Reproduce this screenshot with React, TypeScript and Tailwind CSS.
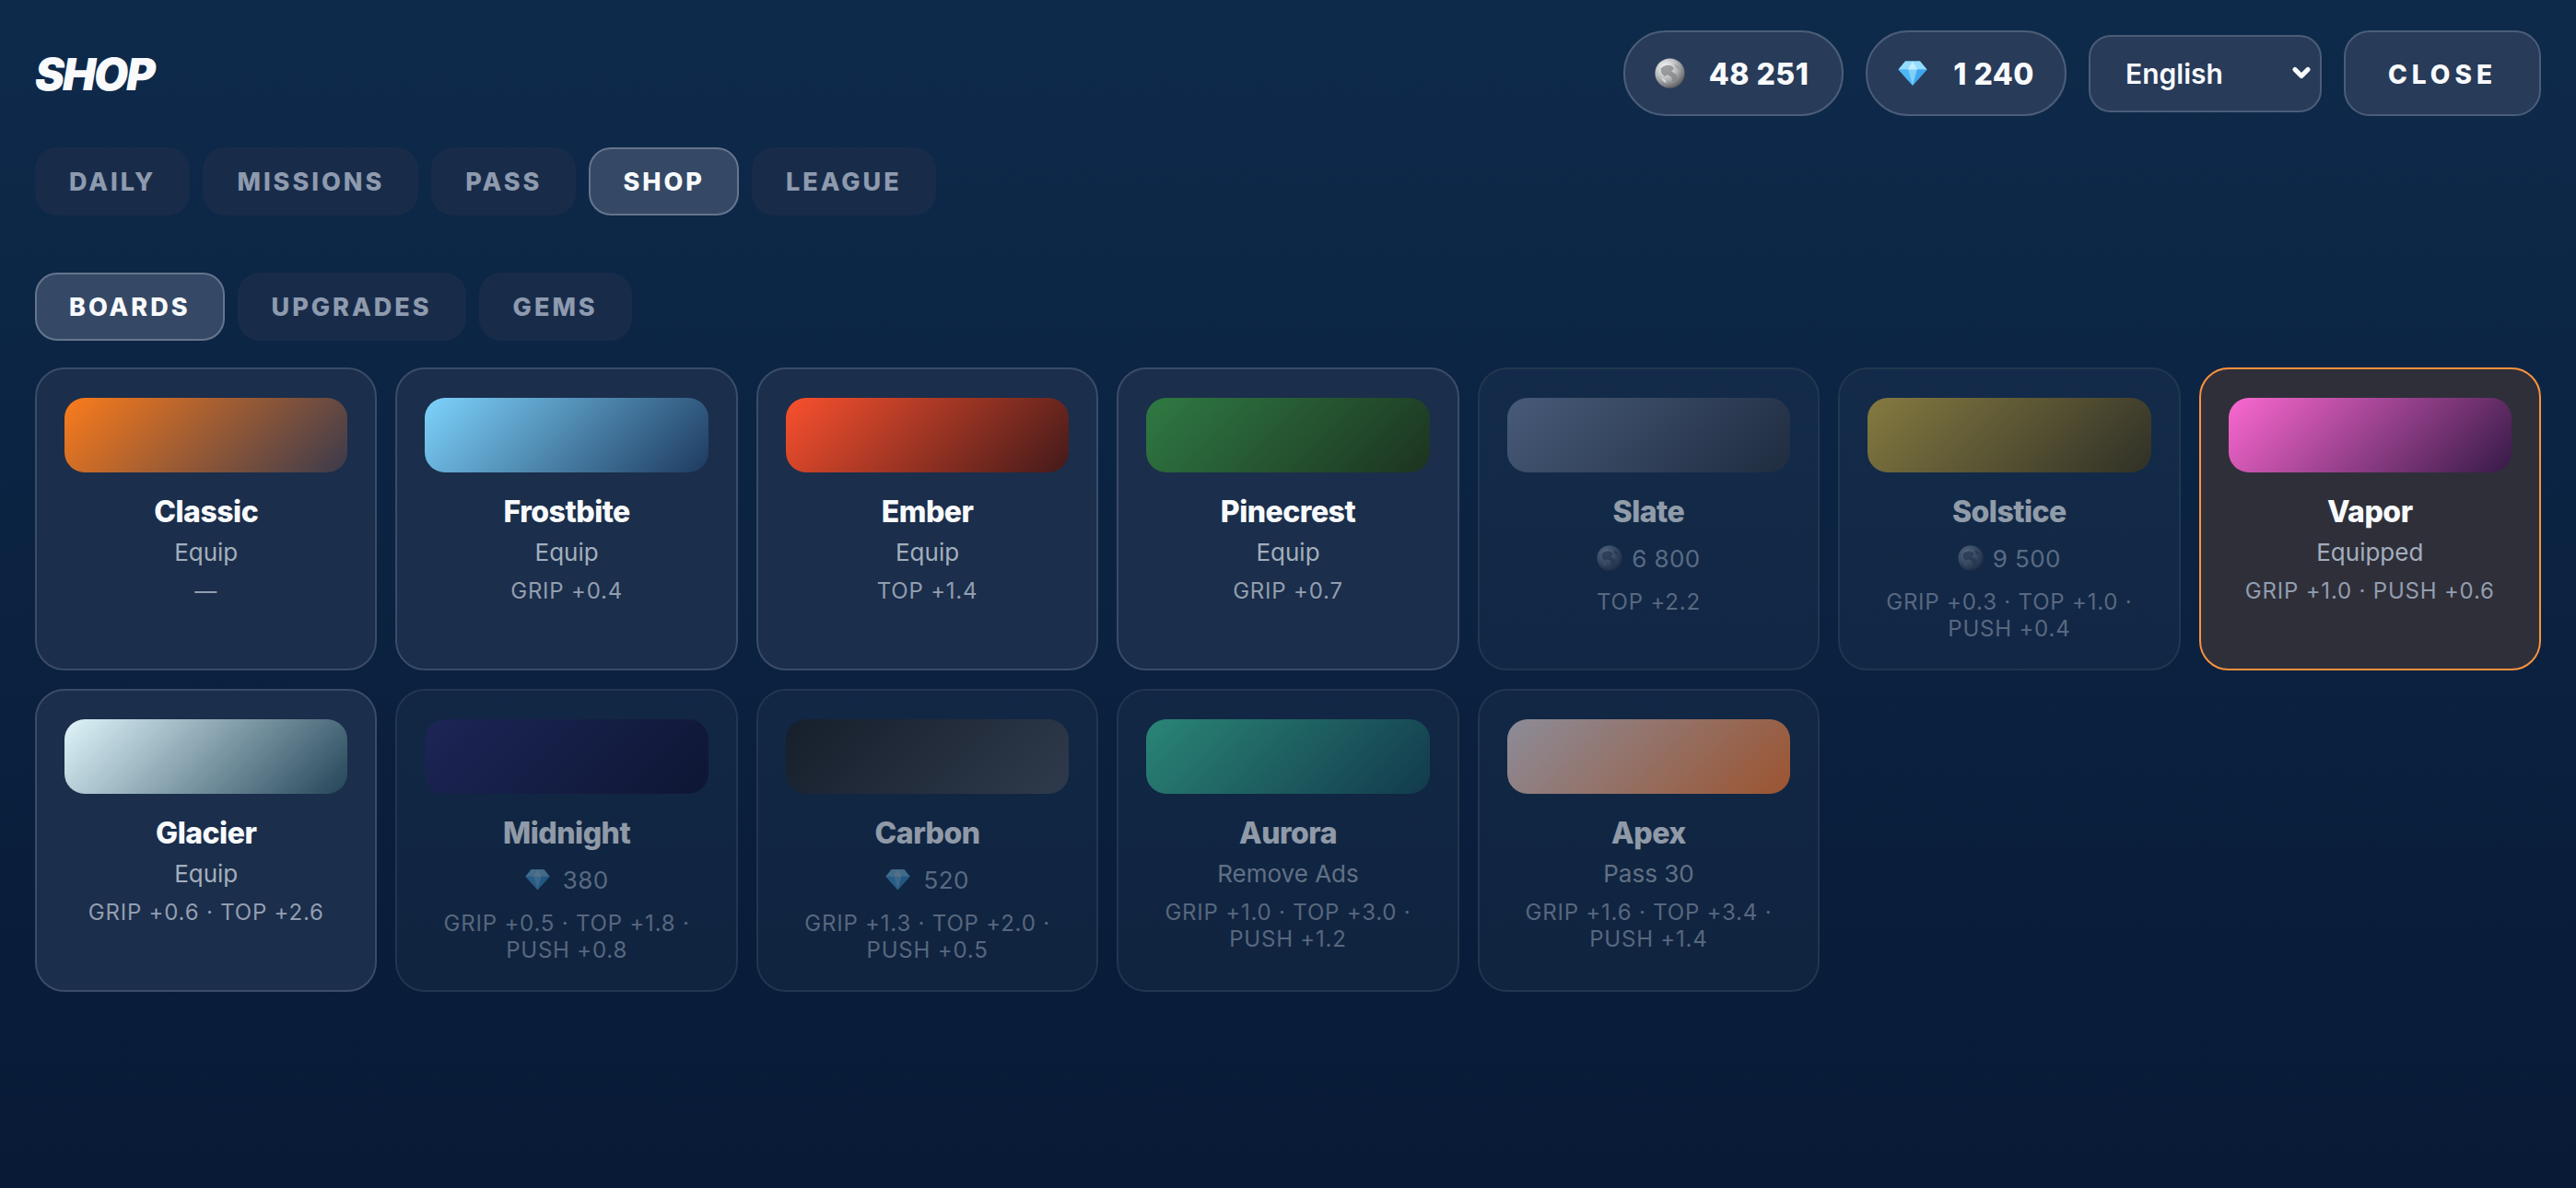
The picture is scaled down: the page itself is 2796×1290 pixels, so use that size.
import { ChevronDown } from 'lucide-react';

const FONT = "font-['Inter','Noto_Sans',sans-serif]";

function Coin({ dim = false, className = '' }: { dim?: boolean; className?: string }) {
  const gradId = dim ? 'coinDim' : 'coinLit';
  return (
    <svg viewBox="0 0 40 40" className={className}>
      <defs>
        <radialGradient id={gradId} cx="35%" cy="30%" r="80%">
          <stop offset="0%" stopColor={dim ? '#8c9bb0' : '#f8fafc'} />
          <stop offset="50%" stopColor={dim ? '#55647a' : '#b6b8ba'} />
          <stop offset="100%" stopColor={dim ? '#1e293b' : '#4b4d50'} />
        </radialGradient>
      </defs>
      <circle cx="20" cy="20" r="19.5" fill={`url(#${gradId})`} />
      <path
        d="M8 14c4-5 10-6 15-3 3 2 2 5-1 6 2 3 6 3 7 7 1 3-2 6-5 7l-2-6-5-3-4 2-4-4z"
        fill={dim ? '#334155' : '#808386'}
        opacity="0.75"
      />
      <path d="M9 26c3 1 6 3 6 7-3-1-5-4-6-7z" fill={dim ? '#64748b' : '#e5e7eb'} opacity="0.8" />
      <path d="M26 8c4 1 7 4 8 8-3 0-7-3-8-8z" fill={dim ? '#334155' : '#9a9c9f'} opacity="0.8" />
    </svg>
  );
}

function Gem({ className = '' }: { className?: string }) {
  return (
    <svg viewBox="0 0 32 27" className={className}>
      <path d="M8 0.5h16l7.5 9L16 26.8 0.5 9.5z" fill="#5cc1f8" />
      <path d="M8 0.5h16l7.5 9h-31z" fill="#93dcfd" />
      <path d="M11 9.5h10L16 26.8z" fill="#7fd0fb" />
      <path d="M11 9.5L16 0.5l5 9z" fill="#c4ecfe" />
      <path d="M21 9.5h10.5L16 26.8z" fill="#3ea7ee" />
      <path d="M0.5 9.5H11L16 26.8z" fill="#4eb6f5" />
    </svg>
  );
}

function Tab({ label, active }: { label: string; active?: boolean }) {
  return (
    <button
      className={`h-[74px] rounded-[24px] border-2 px-[35px] pt-[2px] text-[27px] font-extrabold tracking-[3px] ${
        active
          ? 'border-[#65758d] bg-[#354966] text-[#f8fafc]'
          : 'border-transparent bg-[#182c4a] text-[#8e9aae]'
      }`}
    >
      {label}
    </button>
  );
}

type Board = {
  name: string;
  from: string;
  to: string;
  action?: string;
  coin?: string;
  gem?: string;
  stats: string;
  locked?: boolean;
  equipped?: boolean;
};

const boards: Board[] = [
  { name: 'Classic', from: 'from-[#fb7c1c]', to: 'to-[#3b3a4c]', action: 'Equip', stats: '—' },
  { name: 'Frostbite', from: 'from-[#7dd3fc]', to: 'to-[#1e3a5f]', action: 'Equip', stats: 'GRIP +0.4' },
  { name: 'Ember', from: 'from-[#f9502d]', to: 'to-[#431a1a]', action: 'Equip', stats: 'TOP +1.4' },
  { name: 'Pinecrest', from: 'from-[#2f7a43]', to: 'to-[#1c3320]', action: 'Equip', stats: 'GRIP +0.7' },
  { name: 'Slate', from: 'from-[#475a78]', to: 'to-[#1f2c40]', coin: '6 800', stats: 'TOP +2.2', locked: true },
  { name: 'Solstice', from: 'from-[#857a40]', to: 'to-[#2f3027]', coin: '9 500', stats: 'GRIP +0.3 · TOP +1.0 · PUSH +0.4', locked: true },
  { name: 'Vapor', from: 'from-[#fb68d0]', to: 'to-[#361a48]', action: 'Equipped', stats: 'GRIP +1.0 · PUSH +0.6', equipped: true },
  { name: 'Glacier', from: 'from-[#e0f5fb]', to: 'to-[#244558]', action: 'Equip', stats: 'GRIP +0.6 · TOP +2.6' },
  { name: 'Midnight', from: 'from-[#1c2555]', to: 'to-[#0e1634]', gem: '380', stats: 'GRIP +0.5 · TOP +1.8 · PUSH +0.8', locked: true },
  { name: 'Carbon', from: 'from-[#161f2b]', to: 'to-[#2f3a4c]', gem: '520', stats: 'GRIP +1.3 · TOP +2.0 · PUSH +0.5', locked: true },
  { name: 'Aurora', from: 'from-[#2a8576]', to: 'to-[#123a4c]', action: 'Remove Ads', stats: 'GRIP +1.0 · TOP +3.0 · PUSH +1.2', locked: true },
  { name: 'Apex', from: 'from-[#8c8c99]', to: 'to-[#9c5430]', action: 'Pass 30', stats: 'GRIP +1.6 · TOP +3.4 · PUSH +1.4', locked: true },
];

function BoardCard({ board }: { board: Board }) {
  const shell = board.equipped
    ? 'border-[#fb923c] bg-[#2f2f3a]'
    : board.locked
      ? 'border-[#22364f] bg-white/[0.03]'
      : 'border-[#3a4c68] bg-[#1b2e4b]';
  return (
    <div className={`rounded-[32px] border-2 px-[30px] pb-[29px] pt-[31px] text-center ${shell}`}>
      <div className={`h-[81px] rounded-[22px] bg-linear-135/srgb ${board.from} ${board.to}`} />
      <div className={board.locked ? 'opacity-[0.55]' : ''}>
        <div className="mt-[20px] text-[32px] font-extrabold leading-[46px] tracking-[-0.5px] text-[#f8fafc]">
          {board.name}
        </div>
        {board.action && (
          <div className="mt-[4px] text-[26px] leading-[34px] text-[#a3aebd]">{board.action}</div>
        )}
        {board.coin && (
          <div className="mt-[10px] flex h-[34px] items-center justify-center gap-[10px] text-[26px] tracking-[0.4px] text-[#94a3b8]">
            <Coin dim className="h-[28px] w-[28px]" />
            {board.coin}
          </div>
        )}
        {board.gem && (
          <div className="mt-[10px] flex h-[34px] items-center justify-center gap-[14px] text-[26px] tracking-[0.4px] text-[#94a3b8]">
            <Gem className="h-[24px] w-[27px] opacity-70" />
            {board.gem}
          </div>
        )}
        <div
          className={`text-[24px] leading-[29px] tracking-[0.8px] text-[#929eb0] ${
            board.coin || board.gem ? 'mt-[16px]' : 'mt-[10px]'
          }`}
        >
          {board.stats}
        </div>
      </div>
    </div>
  );
}

export default function App() {
  return (
    <div className={`h-[1290px] w-full bg-gradient-to-b from-[#0e2a4b] to-[#081a36] px-[38px] pt-[33px] ${FONT}`}>
      <header className="flex items-center justify-between">
        <h1 className="pt-[2px] text-[48px] font-black italic tracking-[-2px] text-[#f8fafc]">SHOP</h1>
        <div className="flex items-center gap-[24px]">
          <div className="flex h-[93px] items-center gap-[26px] rounded-[46px] border-2 border-[#4b5d78] bg-[#283b59] pl-[32px] pr-[36px] text-[32px] font-extrabold tracking-[0.5px] text-[#f8fafc]">
            <Coin className="h-[33px] w-[33px]" />
            <span className="pt-[3px]">48 251</span>
          </div>
          <div className="flex h-[93px] items-center gap-[28px] rounded-[46px] border-2 border-[#4b5d78] bg-[#283b59] pl-[33px] pr-[33px] text-[32px] font-extrabold tracking-[0.5px] text-[#f8fafc]">
            <Gem className="h-[27px] w-[32px]" />
            <span className="pt-[3px]">1 240</span>
          </div>
          <div className="relative">
            <select className="h-[84px] w-[253px] appearance-none rounded-[24px] border-2 border-[#4b5d78] bg-[#283b59] pl-[38px] pt-[2px] text-[30px] font-semibold text-[#f8fafc] outline-none">
              <option>English</option>
            </select>
            <ChevronDown
              strokeWidth={4.5}
              className="pointer-events-none absolute right-[8px] top-[27px] h-[28px] w-[28px] text-[#f8fafc]"
            />
          </div>
          <button className="h-[93px] w-[214px] rounded-[28px] border-2 border-[#4b5d78] bg-[#283b59] pt-[2px] text-[28px] font-extrabold tracking-[5px] text-[#f8fafc]">
            CLOSE
          </button>
        </div>
      </header>

      <nav className="mt-[34px] flex gap-[14px]">
        <Tab label="DAILY" />
        <Tab label="MISSIONS" />
        <Tab label="PASS" />
        <Tab label="SHOP" active />
        <Tab label="LEAGUE" />
      </nav>

      <nav className="mt-[62px] flex gap-[14px]">
        <Tab label="BOARDS" active />
        <Tab label="UPGRADES" />
        <Tab label="GEMS" />
      </nav>

      <main className="mt-[29px] grid grid-cols-7 gap-[20px]">
        {boards.map((board) => (
          <BoardCard key={board.name} board={board} />
        ))}
      </main>
    </div>
  );
}
